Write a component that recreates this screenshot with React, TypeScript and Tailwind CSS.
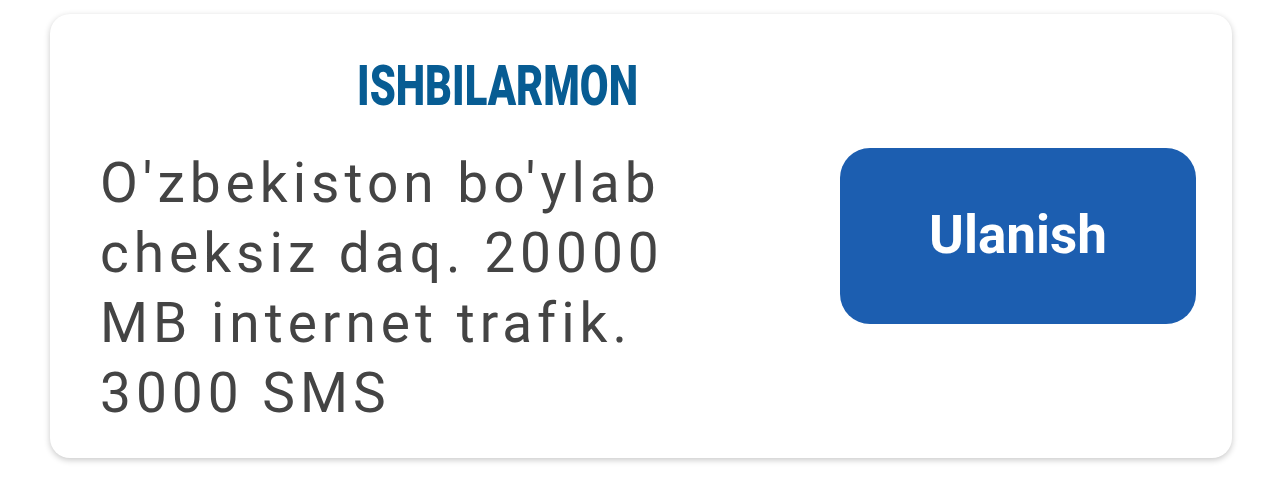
export default function App() {
  return (
    <div className="w-[1280px] h-[488px] bg-white pt-[14px] pl-[50px]">
      <div className="w-[1182px] h-[444px] rounded-[20px] bg-white shadow-[0_2px_6px_rgba(0,0,0,0.22)] pl-[50px] pt-[44px]">
        <div className="w-[795px] flex justify-center">
          <h1 className="text-[56px] leading-[56px] font-black text-[#075c93] scale-x-[0.745] [font-family:Roboto,sans-serif]">
            ISHBILARMON
          </h1>
        </div>
        <div className="flex items-start mt-[34px]">
          <p className="w-[690px] text-[55px] leading-[70px] tracking-[5px] text-[#444444] [font-family:Roboto,sans-serif]">
            O'zbekiston bo'ylab
            <br />
            cheksiz daq. 20000
            <br />
            MB internet trafik.
            <br />
            3000 SMS
          </p>
          <button className="ml-[50px] w-[356px] h-[176px] rounded-[30px] bg-[#1c5eb0] text-white text-[53px] font-bold [font-family:Roboto,sans-serif]">
            Ulanish
          </button>
        </div>
      </div>
    </div>
  );
}
